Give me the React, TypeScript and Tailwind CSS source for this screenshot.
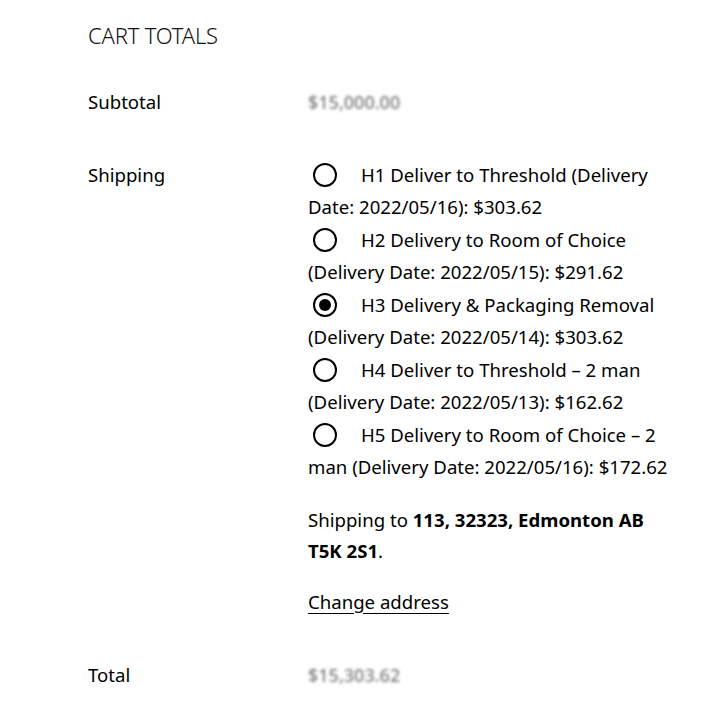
import React from "react";

const options = [
  { id: "h1", label: "H1 Deliver to Threshold (Delivery Date: 2022/05/16): $303.62" },
  { id: "h2", label: "H2 Delivery to Room of Choice (Delivery Date: 2022/05/15): $291.62" },
  { id: "h3", label: "H3 Delivery & Packaging Removal (Delivery Date: 2022/05/14): $303.62" },
  { id: "h4", label: "H4 Deliver to Threshold – 2 man (Delivery Date: 2022/05/13): $162.62" },
  { id: "h5", label: "H5 Delivery to Room of Choice – 2 man (Delivery Date: 2022/05/16): $172.62" },
];

function Radio({ checked }: { checked?: boolean }) {
  return (
    <span className="relative inline-block w-[24px] h-[24px] rounded-full border-2 border-black align-[-5px] ml-[5px] mr-[24px] bg-white">
      {checked && <span className="absolute left-[4px] top-[4px] w-[12px] h-[12px] rounded-full bg-black" />}
    </span>
  );
}

export default function App() {
  return (
    <div className="bg-white w-[720px] min-h-[714px] pl-[88px] pt-[19px] text-black [font-family:'Noto_Sans',sans-serif]">
      <h2 className="text-[22px] leading-[32px] font-light tracking-[-0.2px] text-[#111]">CART TOTALS</h2>

      <div className="grid grid-cols-[220px_372px] mt-[35px] text-[18.6px] leading-[32.5px]">
        <div>Subtotal</div>
        <div className="text-[#7a7a7a] font-medium blur-[1.4px] text-[18px]">$15,000.00</div>

        <div className="mt-[40px]">Shipping</div>
        <div className="mt-[40px]">
          <ul>
            {options.map((o) => (
              <li key={o.id}>
                <Radio checked={o.id === "h3"} />
                <span>{o.label}</span>
              </li>
            ))}
          </ul>
          <p className="mt-[20px] leading-[31px]">
            Shipping to <strong className="font-bold">113, 32323, Edmonton AB T5K 2S1</strong>.
          </p>
          <a href="#" className="inline-block mt-[20px] underline underline-offset-[4px]">
            Change address
          </a>
        </div>

        <div className="mt-[41px]">Total</div>
        <div className="mt-[41px] text-[#7a7a7a] font-medium blur-[1.4px] text-[18px]">$15,303.62</div>
      </div>
    </div>
  );
}
